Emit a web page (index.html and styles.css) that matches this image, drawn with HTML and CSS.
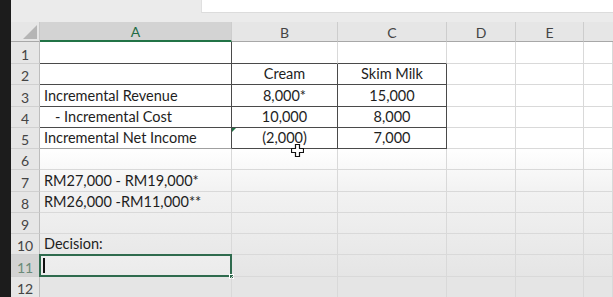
FILE: index.html
```html
<!DOCTYPE html>
<html>
<head>
<meta charset="utf-8">
<link rel="stylesheet" href="styles.css">
</head>
<body>
<div class="app">
  <div class="strip"></div>
  <div class="main">
    <div class="topbar"><div class="formula"></div></div>
    <div class="sheet">
      <div class="corner hdr"><span class="tri"></span></div>
      <div class="hdr col sel">A</div>
      <div class="hdr col">B</div>
      <div class="hdr col">C</div>
      <div class="hdr col">D</div>
      <div class="hdr col">E</div>
      <div class="hdr col last"></div>

      <div class="hdr rn">1</div>
      <div class="c bb rd"></div><div class="c bb"></div><div class="c bb"></div><div class="c"></div><div class="c"></div><div class="c"></div>

      <div class="hdr rn">2</div>
      <div class="c bb rd"></div><div class="c bb rd ctr">Cream</div><div class="c bb rd ctr">Skim Milk</div><div class="c"></div><div class="c"></div><div class="c"></div>

      <div class="hdr rn">3</div>
      <div class="c bb rd">Incremental Revenue</div><div class="c bb rd ctr">8,000*</div><div class="c bb rd ctr">15,000</div><div class="c"></div><div class="c"></div><div class="c"></div>

      <div class="hdr rn">4</div>
      <div class="c bb rd ind">- Incremental Cost</div><div class="c bb rd ctr">10,000</div><div class="c bb rd ctr">8,000</div><div class="c"></div><div class="c"></div><div class="c"></div>

      <div class="hdr rn">5</div>
      <div class="c bl rd">Incremental Net Income</div><div class="c bb rd ctr err">(2,000)</div><div class="c bb rd ctr">7,000</div><div class="c"></div><div class="c"></div><div class="c"></div>

      <div class="hdr rn">6</div>
      <div class="c"></div><div class="c"></div><div class="c"></div><div class="c"></div><div class="c"></div><div class="c"></div>

      <div class="hdr rn">7</div>
      <div class="c over">RM27,000 - RM19,000*</div><div class="c"></div><div class="c"></div><div class="c"></div><div class="c"></div><div class="c"></div>

      <div class="hdr rn">8</div>
      <div class="c over">RM26,000 -RM11,000**</div><div class="c"></div><div class="c"></div><div class="c"></div><div class="c"></div><div class="c"></div>

      <div class="hdr rn">9</div>
      <div class="c"></div><div class="c"></div><div class="c"></div><div class="c"></div><div class="c"></div><div class="c"></div>

      <div class="hdr rn">10</div>
      <div class="c">Decision:</div><div class="c"></div><div class="c"></div><div class="c"></div><div class="c"></div><div class="c"></div>

      <div class="hdr rn rsel">11</div>
      <div class="c active"><span class="caret"></span><span class="handle"></span></div><div class="c"></div><div class="c"></div><div class="c"></div><div class="c"></div><div class="c"></div>

      <div class="hdr rn">12</div>
      <div class="c"></div><div class="c"></div><div class="c"></div><div class="c"></div><div class="c"></div><div class="c"></div>

      <svg class="cursor" width="13" height="13" viewBox="0 0 13 13"><path d="M4.5 0.5h4v4h4v4h-4v4h-4v-4h-4v-4h4z" fill="#fff" stroke="#111" stroke-width="1.2"/></svg>
    </div>
  </div>
</div>
</body>
</html>
```
FILE: styles.css
```css
* { box-sizing: border-box; }
html, body { margin: 0; padding: 0; }
body {
  width: 613px;
  height: 297px;
  overflow: hidden;
  background: #e9e9e9;
  font-family: Lato, "Liberation Sans", sans-serif;
}
.app { display: flex; height: 297px; }
.strip { width: 11px; flex: none; background: #1c1c1c; }
.main { flex: 1; display: flex; flex-direction: column; min-width: 0; }
.topbar {
  height: 22px;
  background: #ebebeb;
  padding-left: 190px;
  flex: none;
}
.formula {
  height: 13px;
  background: #fff;
  border-bottom: 1px solid #dcdcdc;
  border-left: 1px solid #e0e0e0;
}
.sheet {
  position: relative;
  display: grid;
  grid-template-columns: 29px 192px 106px 109px 69px 68px 1fr;
  grid-template-rows: 20px 22px 21px 22px 21px 21px 21px 22px 21px 21px 21px 22px 21px;
  background: linear-gradient(to bottom, #fff 0px, #fff 125px, #f2f2f2 170px, #e5e5e5 255px);
  font-size: 14.5px;
  color: #1e1e1e;
}
.hdr {
  background: #e6e6e6;
  color: #444;
  font-size: 14px;
  display: flex;
  align-items: center;
  justify-content: center;
}
.corner {
  position: relative;
  border-right: 1px solid #c8c8c8;
  border-bottom: 1px solid #a8a8a8;
}
.tri {
  position: absolute;
  right: 2px;
  bottom: 2px;
  width: 0;
  height: 0;
  border-left: 14px solid transparent;
  border-bottom: 14px solid #b5b5b5;
}
.col {
  border-right: 1px solid #cdcdcd;
  border-bottom: 1px solid #a8a8a8;
  padding-top: 1px;
}
.col.sel {
  background: #d3d3d3;
  color: #1f6b45;
  border-bottom: 2px solid #217346;
}
.col.last { border-right: none; }
.rn {
  border-right: 1px solid #bdbdbd;
  border-bottom: 1px solid #d0d0d0;
  padding-top: 3px;
}
.rn.rsel { background: #d3d3d3; color: #6a8a78; }
.c {
  border-right: 1px solid #d9d9d9;
  border-bottom: 1px solid #d9d9d9;
  display: flex;
  align-items: flex-end;
  padding: 0 4px 2px 4px;
  white-space: nowrap;
  position: relative;
}
.c.over { overflow: visible; }
.c.bb { border-bottom-color: #4a4a4a; }
.c.bl { border-bottom-color: #a0a0a0; }
.c.rd { border-right-color: #4a4a4a; }
.c.ctr { justify-content: center; }
.c.ind { padding-left: 15px; }
.c.err::before {
  content: "";
  position: absolute;
  left: 0;
  top: 0;
  border-top: 4px solid #217346;
  border-right: 4px solid transparent;
}
.c.active {
  border: 2px solid #2f6b4e;
  margin-left: -1px;
  margin-top: -1px;
  background: rgba(255,255,255,0.25);
}
.caret {
  position: absolute;
  left: 2px;
  top: 2px;
  width: 2px;
  height: 15px;
  background: #111;
}
.handle {
  position: absolute;
  right: -4px;
  bottom: -4px;
  width: 5px;
  height: 5px;
  background: #2f6b4e;
  border: 1px solid #fff;
}
.cursor {
  position: absolute;
  left: 280px;
  top: 122px;
}
```
